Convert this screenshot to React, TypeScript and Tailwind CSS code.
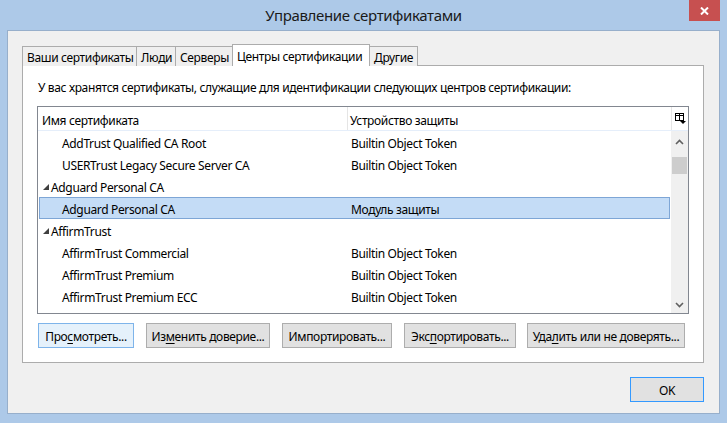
import React from 'react';

const rows = [
  { name: 'AddTrust Qualified CA Root', token: 'Builtin Object Token', level: 1 },
  { name: 'USERTrust Legacy Secure Server CA', token: 'Builtin Object Token', level: 1 },
  { name: 'Adguard Personal CA', token: '', level: 0 },
  { name: 'Adguard Personal CA', token: 'Модуль защиты', level: 1, selected: true },
  { name: 'AffirmTrust', token: '', level: 0 },
  { name: 'AffirmTrust Commercial', token: 'Builtin Object Token', level: 1 },
  { name: 'AffirmTrust Premium', token: 'Builtin Object Token', level: 1 },
  { name: 'AffirmTrust Premium ECC', token: 'Builtin Object Token', level: 1 },
];

const tabs = [
  { label: 'Ваши сертификаты', w: 'w-[115px]' },
  { label: 'Люди', w: 'w-[40px]' },
  { label: 'Серверы', w: 'w-[58px]' },
  { label: 'Центры сертификации', w: 'w-[138px]', active: true },
  { label: 'Другие', w: 'w-[49px]' },
];

const ColumnPickerIcon = () => (
  <svg width="11" height="11" viewBox="0 0 11 11">
    <rect x="0.5" y="0.5" width="8" height="7" fill="none" stroke="#000" />
    <line x1="0.5" y1="2.5" x2="8.5" y2="2.5" stroke="#000" />
    <line x1="4.5" y1="0.5" x2="4.5" y2="7.5" stroke="#000" />
    <path d="M5 8 L11 8 L8 11 Z" fill="#000" />
  </svg>
);

const Chevron = ({ up }: { up?: boolean }) => (
  <svg width="9" height="6" viewBox="0 0 9 6">
    <path
      d={up ? 'M1 5 L4.5 1.5 L8 5' : 'M1 1 L4.5 4.5 L8 1'}
      fill="none"
      stroke="#606060"
      strokeWidth="1.6"
    />
  </svg>
);

const Btn = ({ children, w, focused }: { children: React.ReactNode; w: string; focused?: boolean }) => (
  <div
    className={`${w} h-[25px] pt-[2px] flex items-center justify-center border text-[12px] tracking-[-0.35px] text-black ${
      focused ? 'bg-[#e5f1fb] border-[#7eb4ea]' : 'bg-[#e1e1e1] border-[#adadad]'
    }`}
  >
    {children}
  </div>
);

export default function App() {
  return (
    <div
      className="w-[727px] h-[423px] bg-[#adc9e8] flex flex-col overflow-hidden"
      style={{ fontFamily: '"Noto Sans", "Open Sans", sans-serif' }}
    >
      {/* Title bar */}
      <div className="relative h-[30px] shrink-0 flex items-center justify-center pt-[1px]">
        <span className="text-[15px] text-[#1a1a1a] tracking-[-0.35px]">Управление сертификатами</span>
        <div className="absolute right-[7px] top-0 w-[31px] h-[21px] bg-[#c75050] flex items-center justify-center">
          <svg width="9" height="8" viewBox="0 0 9 8">
            <path d="M1 0.5 L8 7.5 M8 0.5 L1 7.5" stroke="#fff" strokeWidth="2" />
          </svg>
        </div>
      </div>

      {/* Client area */}
      <div className="mx-[7px] h-[384px] border border-[#97afcb] bg-[#f0f0f0] flex flex-col pl-[14px] pr-[15px] pt-[13px] text-[12px] tracking-[-0.35px]">
        {/* Tabs */}
        <div className="flex items-end h-[22px] relative z-10">
          {tabs.map((t, i) =>
            t.active ? (
              <div
                key={i}
                className={`${t.w} h-[22px] -ml-px bg-white border border-b-0 border-[#acacac] pl-[4px] pt-[3px] text-black whitespace-nowrap`}
              >
                {t.label}
              </div>
            ) : (
              <div
                key={i}
                className={`${t.w} h-[20px] ${i === 0 ? '' : '-ml-px'} bg-[#efefef] border border-b-0 border-[#acacac] pl-[4px] pt-[1px] text-black whitespace-nowrap leading-[19px]`}
              >
                {t.label}
              </div>
            )
          )}
        </div>

        {/* Panel */}
        <div className="-mt-px h-[298px] bg-white border border-[#acacac] flex flex-col px-[14px]">
          <div className="h-[40px] pt-[4px] flex items-center pl-px text-black whitespace-nowrap">
            У вас хранятся сертификаты, служащие для идентификации следующих центров сертификации:
          </div>

          {/* Table */}
          <div className="h-[208px] border border-[#828790] flex flex-col">
            <div className="h-[24px] shrink-0 flex border-b border-[#e5eefa] text-black">
              <div className="w-[310px] flex items-center pl-[4px] pt-[4px] border-r border-[#e5e5e5]">Имя сертификата</div>
              <div className="flex-1 flex items-center pl-[2px] pt-[4px]">Устройство защиты</div>
              <div className="w-[17px] flex items-center justify-center border-l border-[#e5e5e5]">
                <ColumnPickerIcon />
              </div>
            </div>
            <div className="flex-1 flex min-h-0">
              <div className="flex-1 overflow-hidden">
                {rows.map((r, i) => (
                  <div
                    key={i}
                    className={`h-[22px] pt-[3px] flex items-center text-black whitespace-nowrap ${
                      r.selected ? 'bg-[#c4dcf6] border border-[#7ea6d6] mx-px' : 'mx-px border border-transparent'
                    }`}
                  >
                    <div className="w-[309px] flex items-center">
                      {r.level === 0 ? (
                        <>
                          <svg width="6" height="6" viewBox="0 0 6 6" className="ml-[3px] mr-[2px] -mt-[1px]">
                            <path d="M6 0 L6 6 L0 6 Z" fill="#404040" />
                          </svg>
                          <span>{r.name}</span>
                        </>
                      ) : (
                        <span className="pl-[22px]">{r.name}</span>
                      )}
                    </div>
                    <div className="pl-[2px]">{r.token}</div>
                  </div>
                ))}
              </div>
              {/* Scrollbar */}
              <div className="w-[17px] bg-[#f0f0f0] flex flex-col items-center">
                <div className="h-[22px] flex items-center justify-center">
                  <Chevron up />
                </div>
                <div className="mt-[4px] w-[15px] h-[17px] bg-[#cdcdcd]" />
                <div className="flex-1" />
                <div className="h-[17px] flex items-center justify-center">
                  <Chevron />
                </div>
              </div>
            </div>
          </div>

          {/* Buttons */}
          <div className="mt-[9px] flex pl-[1px]">
            <Btn w="w-[96px]" focused>
              Про<u className="underline-offset-2">с</u>мотреть...
            </Btn>
            <div className="w-[12px]" />
            <Btn w="w-[124px]">
              Из<u className="underline-offset-2">м</u>енить доверие...
            </Btn>
            <div className="w-[12px]" />
            <Btn w="w-[110px]">Импортировать...</Btn>
            <div className="w-[12px]" />
            <Btn w="w-[112px]">
              Экс<u className="underline-offset-2">п</u>ортировать...
            </Btn>
            <div className="w-[11px]" />
            <Btn w="w-[158px]">
              Уда<u className="underline-offset-2">л</u>ить или не доверять...
            </Btn>
          </div>
        </div>

        {/* OK */}
        <div className="mt-[14px] flex justify-end">
          <div className="w-[74px] h-[25px] pt-[2px] bg-[#e1e1e1] border border-[#3399ff] flex items-center justify-center text-black">
            OK
          </div>
        </div>
      </div>
    </div>
  );
}
